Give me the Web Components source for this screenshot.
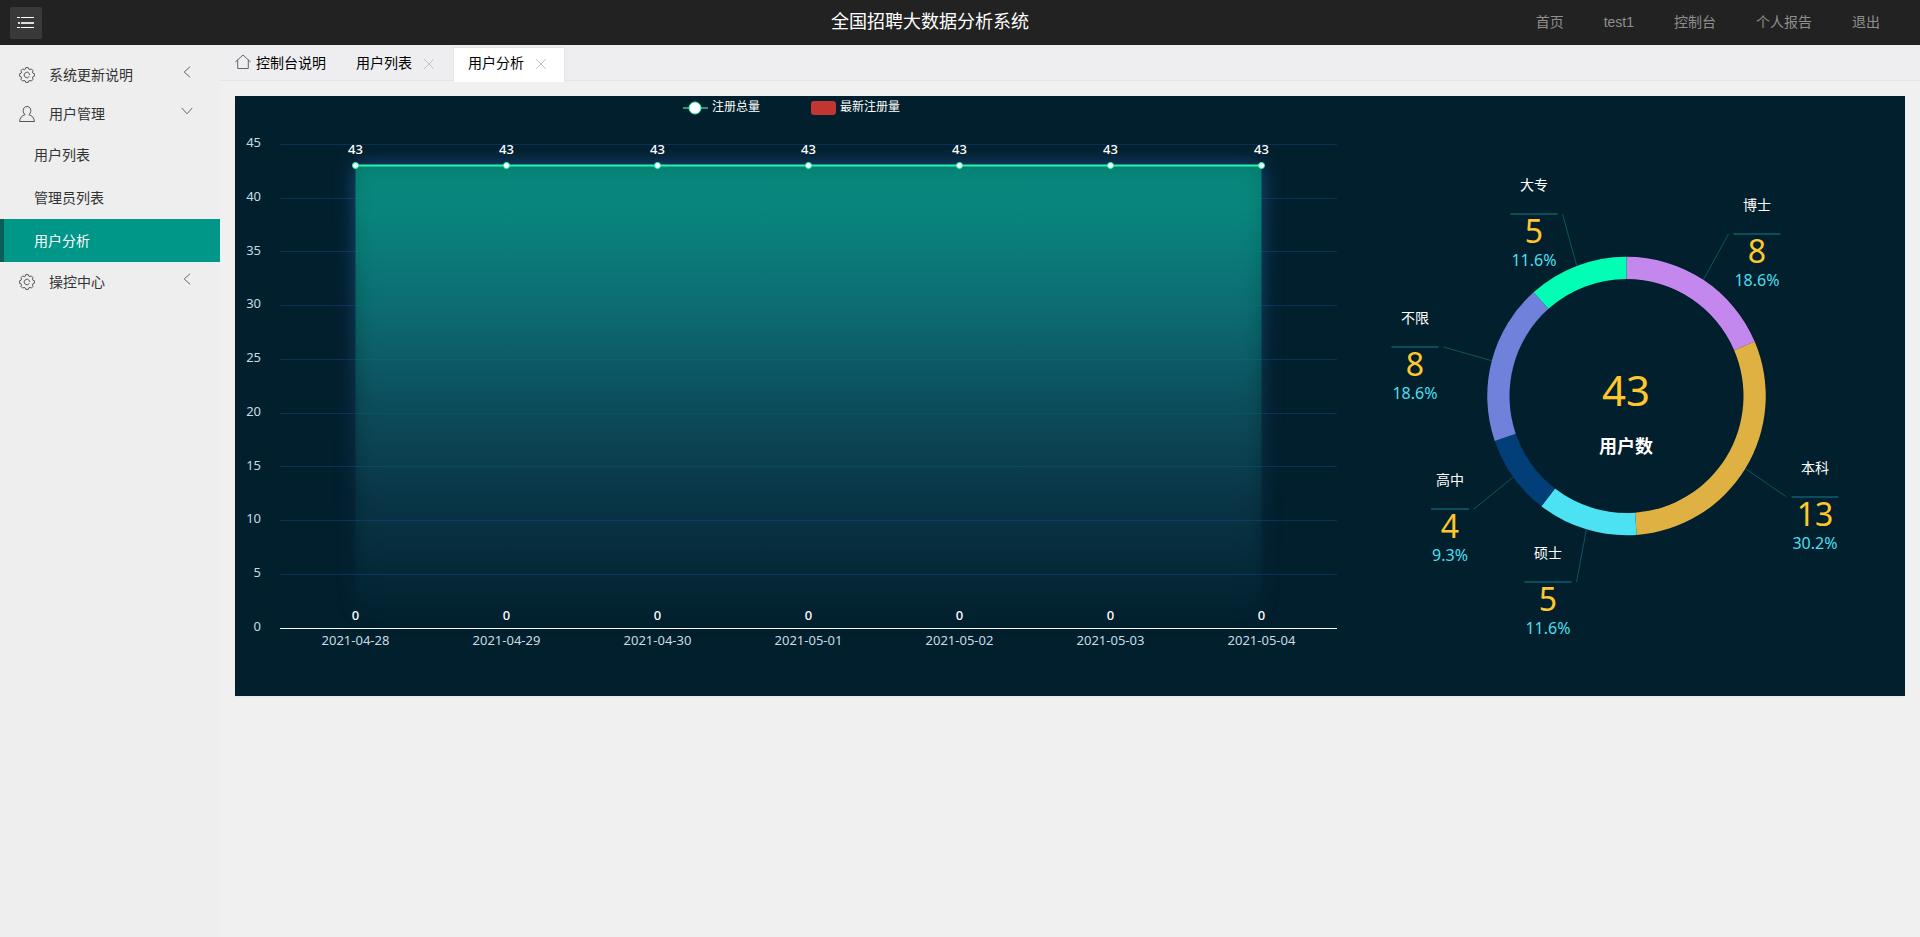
<!DOCTYPE html>
<html lang="zh-CN">
<head>
<meta charset="utf-8">
<meta name="viewport" content="width=device-width, initial-scale=1">
<title>全国招聘大数据分析系统</title>
<style>
  html, body { margin: 0; min-height: 100%; }
  body {
    font: 14px/20px "Liberation Sans", "Noto Sans CJK SC", sans-serif;
    color: #333;
    background: #f0f0f0;
  }
</style>
</head>
<body>
<app-shell>
  <app-header slot="header">
    <span>全国招聘大数据分析系统</span>
    <nav-link slot="nav">首页</nav-link>
    <nav-link slot="nav">test1</nav-link>
    <nav-link slot="nav">控制台</nav-link>
    <nav-link slot="nav">个人报告</nav-link>
    <nav-link slot="nav">退出</nav-link>
  </app-header>

  <side-group slot="side" icon="gear" label="系统更新说明"></side-group>
  <side-group slot="side" icon="user" label="用户管理" open>
    <side-item>用户列表</side-item>
    <side-item>管理员列表</side-item>
    <side-item active>用户分析</side-item>
  </side-group>
  <side-group slot="side" icon="gear" label="操控中心"></side-group>

  <tab-bar slot="tabs">
    <tab-item home>控制台说明</tab-item>
    <tab-item>用户列表</tab-item>
    <tab-item active>用户分析</tab-item>
  </tab-bar>

  <chart-panel>
    <line-chart></line-chart>
    <donut-chart></donut-chart>
  </chart-panel>
</app-shell>

<script>
/* Outline of an eight-toothed cog centred in a 16px box. */
function cogPath() {
  const pts = [];
  for (let i = 0; i < 8; i++) {
    for (const [offset, radius] of [[-16, 6.2], [-10, 7.5], [10, 7.5], [16, 6.2]]) {
      const t = (i * 45 + offset) * Math.PI / 180;
      pts.push(`${(8 + radius * Math.sin(t)).toFixed(2)} ${(8 - radius * Math.cos(t)).toFixed(2)}`);
    }
  }
  return `M${pts.join('L')}Z`;
}

const ICONS = {
  gear: `<svg width="16" height="16" viewBox="0 0 16 16" fill="none" stroke="#5a5a5a" stroke-linejoin="round" stroke-linecap="round"><path d="${cogPath()}"/><path d="M10.200 9.700A2.800 2.800 0 1 1 10.200 6.300L10.600 7.500"/></svg>`,
  user: '<svg width="16" height="16" viewBox="0 0 16 16" fill="none" stroke="#555" stroke-linejoin="round"><path d="M8 .5C5.600 .5 4.200 2.300 4.200 4.600C4.200 6.400 5 7.900 6.200 8.700C3 9.400 .6 12 .6 15.500H15.400C15.400 12 13 9.400 9.800 8.700C11 7.900 11.800 6.400 11.800 4.600C11.800 2.300 10.400 .5 8 .5Z"/></svg>',
  home: '<svg width="16" height="16" viewBox="0 0 16 16" fill="none" stroke="#666" stroke-linejoin="round" stroke-linecap="round"><path d="M.6 7.800L8 1L15.400 7.800M2.700 6.200V14.500H13.300V6.200"/></svg>',
  left: '<svg width="12" height="12" viewBox="0 0 12 12" fill="none" stroke="#666" stroke-linecap="round"><path d="M8.800 1L3.200 6L8.800 11"/></svg>',
  down: '<svg width="12" height="12" viewBox="0 0 12 12" fill="none" stroke="#666" stroke-linecap="round"><path d="M1 3.200L6 8.800L11 3.200"/></svg>',
  close: '<svg width="12" height="12" viewBox="0 0 12 12" fill="none" stroke="#c2c2c2" stroke-linecap="round"><path d="M1.500 1.500L10.500 10.500M10.500 1.500L1.500 10.500"/></svg>',
  menu: '<svg width="18" height="12" viewBox="0 0 18 12" stroke="#fff" fill="none"><path d="M0 .5H3M4 .5H17M0 10.500H3M4 10.500H17"/><path stroke-width="2" stroke="#ddd" d="M1 6H3M4 6H17"/></svg>'
};

function define(name, markup) {
  customElements.define(name, class extends HTMLElement {
    constructor() {
      super();
      this.attachShadow({ mode: 'open' });
    }
    connectedCallback() {
      this.shadowRoot.innerHTML = typeof markup === 'function' ? markup(this) : markup;
    }
  });
}

define('app-shell', `
  <style>
    :host { display: flex; flex-direction: column; min-height: 100vh; }
    .body { display: flex; flex: 1; }
    aside { width: 220px; flex: none; box-sizing: border-box; padding-top: 10px; background: #eee; }
    .content { flex: 1; min-width: 0; }
    main { padding: 15px; }
  </style>
  <slot name="header"></slot>
  <div class="body">
    <aside><slot name="side"></slot></aside>
    <div class="content">
      <slot name="tabs"></slot>
      <main><slot></slot></main>
    </div>
  </div>`);

define('app-header', `
  <style>
    :host { display: grid; grid-template-columns: 1fr auto 1fr; align-items: center; box-sizing: border-box; height: 45px; padding: 0 60px 1px 10px; background: #222; }
    button { display: flex; align-items: center; justify-content: center; width: 32px; height: 32px; margin: 1px 0 0; padding: 0; border: 0; border-radius: 2px; background: #393939; }
    h1 { margin: 0 10px 1px 0; font-size: 18px; line-height: 24px; font-weight: 400; color: #fff; }
    nav { display: flex; justify-content: flex-end; margin: 0 -40px 1px 0; }
  </style>
  <button type="button" aria-label="菜单">${ICONS.menu}</button>
  <h1><slot></slot></h1>
  <nav><slot name="nav"></slot></nav>`);

define('nav-link', `
  <style>
    :host { display: block; }
    a { display: block; padding: 0 20px; line-height: 20px; color: #8f8f8f; text-decoration: none; white-space: nowrap; }
  </style>
  <a href="#"><slot></slot></a>`);

define('side-group', el => `
  <style>
    :host { display: block; }
    a { display: flex; align-items: center; height: 39px; padding: 0 27px 0 19px; color: #333; text-decoration: none; }
    .text { flex: 1; margin-left: 14px; }
    .arrow { display: flex; padding-bottom: 6px; }
  </style>
  <a href="#">${ICONS[el.getAttribute('icon')]}<span class="text">${el.getAttribute('label')}</span><span class="arrow">${el.hasAttribute('open') ? ICONS.down : ICONS.left}</span></a>
  <slot></slot>`);

define('side-item', `
  <style>
    :host { display: block; }
    a { display: block; height: 43px; box-sizing: border-box; padding-left: 30px; border-left: 4px solid transparent; line-height: 44px; color: #333; text-decoration: none; }
    :host([active]) a { color: #fff; background: #009688; border-left-color: #0c5d55; }
  </style>
  <a href="#"><slot></slot></a>`);

define('tab-bar', `
  <style>
    :host { display: flex; box-sizing: border-box; height: 36px; border-bottom: 1px solid #e5e5e5; background: #eeeef0; }
  </style>
  <slot></slot>`);

define('tab-item', el => `
  <style>
    :host { display: flex; align-items: center; box-sizing: border-box; height: 35px; margin-top: 2px; padding: 0 18px 4px 15px; }
    :host([home]) { padding-right: 15px; }
    :host([active]) { padding: 0 17px 4px 14px; background: #fff; border: 1px solid #e5e5e5; border-bottom: 0; }
    a { display: flex; align-items: center; gap: 5px; line-height: 20px; color: #000; text-decoration: none; white-space: nowrap; }
    a svg { margin-bottom: 2px; }
    button { display: flex; margin: 2px 0 0 11px; padding: 0; border: 0; background: none; }
  </style>
  <a href="#">${el.hasAttribute('home') ? ICONS.home : ''}<slot></slot></a>
  ${el.hasAttribute('home') ? '' : `<button type="button" aria-label="关闭">${ICONS.close}</button>`}`);

define('chart-panel', `
  <style>
    :host { display: grid; grid-template-columns: 1113fr 557fr; background: #021f2d; box-shadow: 0 1px 2px rgba(0,0,0,.05); }
  </style>
  <slot></slot>`);

const CHART_STYLE = `
  :host { display: block; min-width: 0; }
  svg { display: block; width: 100%; height: auto; font-family: "Noto Sans", "Noto Sans CJK SC", sans-serif; }`;

define('line-chart', () => {
  const dates = ['2021-04-28', '2021-04-29', '2021-04-30', '2021-05-01', '2021-05-02', '2021-05-03', '2021-05-04'];
  const total = [43, 43, 43, 43, 43, 43, 43];
  const fresh = [0, 0, 0, 0, 0, 0, 0];
  const left = 45, right = 1102, top = 48, base = 532, step = (right - left) / dates.length;
  const x = i => left + step * (i + .5);
  const y = v => base - v * (base - top) / 45;
  const first = x(0), last = x(dates.length - 1);
  let ticks = '';
  for (let v = 0; v <= 45; v += 5) {
    const ly = Math.floor(y(v) + .3) + .5;
    ticks += `<line x1="${left}" x2="${right}" y1="${ly}" y2="${ly}" stroke="${v ? '#0a3158' : '#fff'}"/>
      <text x="26" y="${Math.round(y(v)) + 3}" text-anchor="end">${v}</text>`;
  }
  return `
  <style>${CHART_STYLE}
    .axis { font-size: 13px; fill: #c8dde3; }
    .value { font-size: 13px; font-weight: 500; fill: #fff; text-anchor: middle; }
    .legend { font-size: 12px; fill: #fff; }
  </style>
  <svg viewBox="0 0 1113 600" role="img" aria-label="注册量">
    <defs>
      <linearGradient id="area" x1="0" y1="0" x2="0" y2="1">
        <stop offset="0" stop-color="#00a078" stop-opacity=".7"/>
        <stop offset=".1" stop-color="#00a07c" stop-opacity=".68"/>
        <stop offset=".27" stop-color="#00a078" stop-opacity=".48"/>
        <stop offset=".5" stop-color="#00a078" stop-opacity=".23"/>
        <stop offset=".72" stop-color="#00a078" stop-opacity=".08"/>
        <stop offset="1" stop-color="#00a078" stop-opacity="0"/>
      </linearGradient>
      <linearGradient id="glow" x1="0" y1="0" x2="0" y2="1">
        <stop offset="0" stop-color="#1c4f88"/>
        <stop offset=".3" stop-color="#1c4f84" stop-opacity=".75"/>
        <stop offset=".55" stop-color="#1c4a74" stop-opacity=".5"/>
        <stop offset="1" stop-color="#1c4a74" stop-opacity="0"/>
      </linearGradient>
      <filter id="blur" x="-10%" y="-10%" width="120%" height="120%" color-interpolation-filters="sRGB"><feGaussianBlur stdDeviation="10"/></filter>
    </defs>
    <g class="axis">${ticks}
      ${dates.map((d, i) => `<text x="${x(i)}" y="549" text-anchor="middle">${d}</text>`).join('')}
    </g>
    <rect x="${first}" y="${y(43)}" width="${last - first}" height="${base - y(43)}" fill="url(#glow)" filter="url(#blur)"/>
    <rect x="${first}" y="${y(43)}" width="${last - first}" height="${base - y(43)}" fill="url(#area)"/>
    <line x1="${left}" x2="${right}" y1="532.5" y2="532.5" stroke="#fff"/>
    <polyline points="${total.map((v, i) => `${x(i)},${y(v)}`).join(' ')}" fill="none" stroke="#28f5b0" stroke-width="2"/>
    ${total.map((v, i) => `<circle cx="${x(i)}" cy="${y(v)}" r="3" fill="#fff" stroke="#28f5b0"/><text class="value" x="${x(i)}" y="58">${v}</text>`).join('')}
    ${fresh.map((v, i) => `<text class="value" x="${x(i)}" y="524">${v}</text>`).join('')}
    <g class="legend">
      <line x1="448" x2="473" y1="12" y2="12" stroke="#1c9c7c" stroke-width="2"/>
      <circle cx="460" cy="12" r="6" fill="#fff" stroke="#28f5b0"/>
      <text x="477" y="15">注册总量</text>
      <rect x="576" y="5" width="25" height="14" rx="3" fill="#c23531"/>
      <text x="605" y="15">最新注册量</text>
    </g>
  </svg>`;
});

define('donut-chart', () => {
  const cx = 278.5, cy = 300, R = 139.25, r = 117;
  /* x: label centre, y: rule, w: rule width, side: where the leader leaves the label */
  const data = [
    { name: '博士', value: 8, pct: '18.6%', color: '#c487ee', x: 409, y: 138, w: 47, side: -1 },
    { name: '本科', value: 13, pct: '30.2%', color: '#dfb142', x: 467, y: 401, w: 47, side: -1 },
    { name: '硕士', value: 5, pct: '11.6%', color: '#4be2f3', x: 200, y: 486, w: 47, side: 1 },
    { name: '高中', value: 4, pct: '9.3%', color: '#023e77', x: 102, y: 413, w: 38, side: 1 },
    { name: '不限', value: 8, pct: '18.6%', color: '#6f81da', x: 67, y: 251, w: 47, side: 1 },
    { name: '大专', value: 5, pct: '11.6%', color: '#00ffb4', x: 186, y: 118, w: 47, side: 1 }
  ];
  const sum = data.reduce((s, d) => s + d.value, 0);
  const at = (a, q) => `${cx + q * Math.sin(a)} ${cy - q * Math.cos(a)}`;
  let a = 0, out = '';
  for (const d of data) {
    const b = a + d.value / sum * 2 * Math.PI;
    const big = b - a > Math.PI ? 1 : 0;
    out += `<path fill="${d.color}" d="M${at(a, R)}A${R} ${R} 0 ${big} 1 ${at(b, R)}L${at(b, r)}A${r} ${r} 0 ${big} 0 ${at(a, r)}Z"/>
      <path stroke="#0c5564" fill="none" d="M${at((a + b) / 2, R)}L${d.x + d.side * (d.w / 2 + 5)} ${d.y}"/>
      <line stroke="#0b4d5c" stroke-width="2" x1="${d.x - d.w / 2}" x2="${d.x + d.w / 2}" y1="${d.y}" y2="${d.y}"/>
      <text class="name" x="${d.x}" y="${d.y - 24}">${d.name}</text>
      <text class="num" x="${d.x}" y="${d.y + 29}">${d.value}</text>
      <text class="pct" x="${d.x}" y="${d.y + 52}">${d.pct}</text>`;
    a = b;
  }
  return `
  <style>${CHART_STYLE}
    text { text-anchor: middle; }
    .name { font-size: 14px; fill: #fff; }
    .num { font-size: 32px; fill: #ffc72b; }
    .pct { font-size: 16px; fill: #49dff0; }
    .total { font-size: 42px; fill: #ffc72b; }
    .caption { font-size: 18px; font-weight: 700; fill: #fff; }
  </style>
  <svg viewBox="0 0 557 600" role="img" aria-label="用户学历分布">
    ${out}
    <text class="total" x="278" y="310">${sum}</text>
    <text class="caption" x="278" y="357">用户数</text>
  </svg>`;
});
</script>
</body>
</html>
